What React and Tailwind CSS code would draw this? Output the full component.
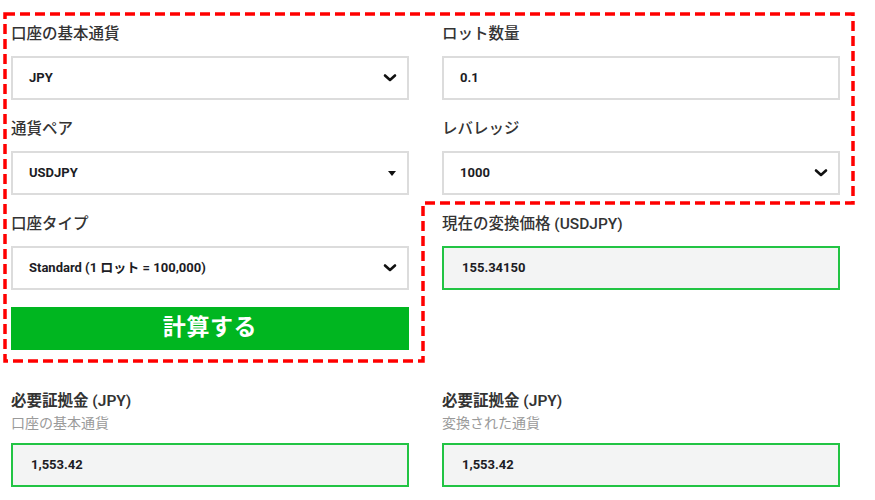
import React from 'react';

const font = { fontFamily: 'Roboto, "Noto Sans CJK JP", sans-serif' };

const Chevron = () => (
    <svg width="14" height="10" viewBox="0 0 14 10" className="shrink-0">
        <path d="M2 2.5 L7 7 L12 2.5" fill="none" stroke="#111" strokeWidth="2.6" strokeLinecap="round" strokeLinejoin="round" />
    </svg>
);

const Caret = () => (
    <svg width="10" height="7" viewBox="0 0 10 7" className="shrink-0">
        <path d="M1 1 H9 L5 6 Z" fill="#111" />
    </svg>
);

const Label = ({ children }) => (
    <div className="h-6 leading-6 text-[15.5px] font-medium text-[#333] whitespace-nowrap">{children}</div>
);

const Field = ({ value, icon }) => (
    <div className="mt-[10px] h-[44px] border-2 border-[#dcdcdc] bg-white flex items-center justify-between pl-[16px] pr-[10px]">
        <span className="text-[13px] font-bold text-[#1c1c24]">{value}</span>
        {icon}
    </div>
);

const Result = ({ value }) => (
    <div className="h-[44px] border-2 border-[#22c444] bg-[#f3f4f4] flex items-center pl-[18px]">
        <span className="text-[13px] font-bold text-[#1c1c24]">{value}</span>
    </div>
);

export default function App() {
    return (
        <div className="relative w-[875px] h-[500px] bg-white overflow-hidden" style={font}>
            <div className="pl-[11px] pt-[22px]">
                <div className="grid grid-cols-[398px_398px] gap-x-[33px] gap-y-[17px]">
                    <div>
                        <Label>口座の基本通貨</Label>
                        <Field value="JPY" icon={<Chevron />} />
                    </div>
                    <div>
                        <Label>ロット数量</Label>
                        <Field value="0.1" />
                    </div>
                    <div>
                        <Label>通貨ペア</Label>
                        <Field value="USDJPY" icon={<Caret />} />
                    </div>
                    <div>
                        <Label>レバレッジ</Label>
                        <Field value="1000" icon={<Chevron />} />
                    </div>
                    <div>
                        <Label>口座タイプ</Label>
                        <Field value="Standard (1 ロット = 100,000)" icon={<Chevron />} />
                        <button className="mt-[17px] w-full h-[43px] bg-[#00b620] text-white text-[23px] font-bold tracking-wide">
                            計算する
                        </button>
                    </div>
                    <div>
                        <Label>現在の変換価格 (USDJPY)</Label>
                        <div className="mt-[10px]">
                            <Result value="155.34150" />
                        </div>
                    </div>
                </div>

                <div className="mt-[39px] grid grid-cols-[398px_398px] gap-x-[33px]">
                    <div>
                        <div className="h-6 leading-6 text-[15.5px] font-semibold text-[#333]">必要証拠金 (JPY)</div>
                        <div className="h-5 leading-5 text-[14px] text-[#9a9a9a]">口座の基本通貨</div>
                        <div className="mt-[10px]">
                            <Result value="1,553.42" />
                        </div>
                    </div>
                    <div>
                        <div className="h-6 leading-6 text-[15.5px] font-semibold text-[#333]">必要証拠金 (JPY)</div>
                        <div className="h-5 leading-5 text-[14px] text-[#9a9a9a]">変換された通貨</div>
                        <div className="mt-[10px]">
                            <Result value="1,553.42" />
                        </div>
                    </div>
                </div>
            </div>

            {/* red dashed annotation over the form */}
            <svg className="absolute inset-0 pointer-events-none" width="875" height="500">
                <path
                    d="M5 14 H853 V203 H423 V361 H5 Z"
                    fill="none"
                    stroke="#ff0000"
                    strokeWidth="3.5"
                    strokeDasharray="10 5"
                />
            </svg>
        </div>
    );
}
